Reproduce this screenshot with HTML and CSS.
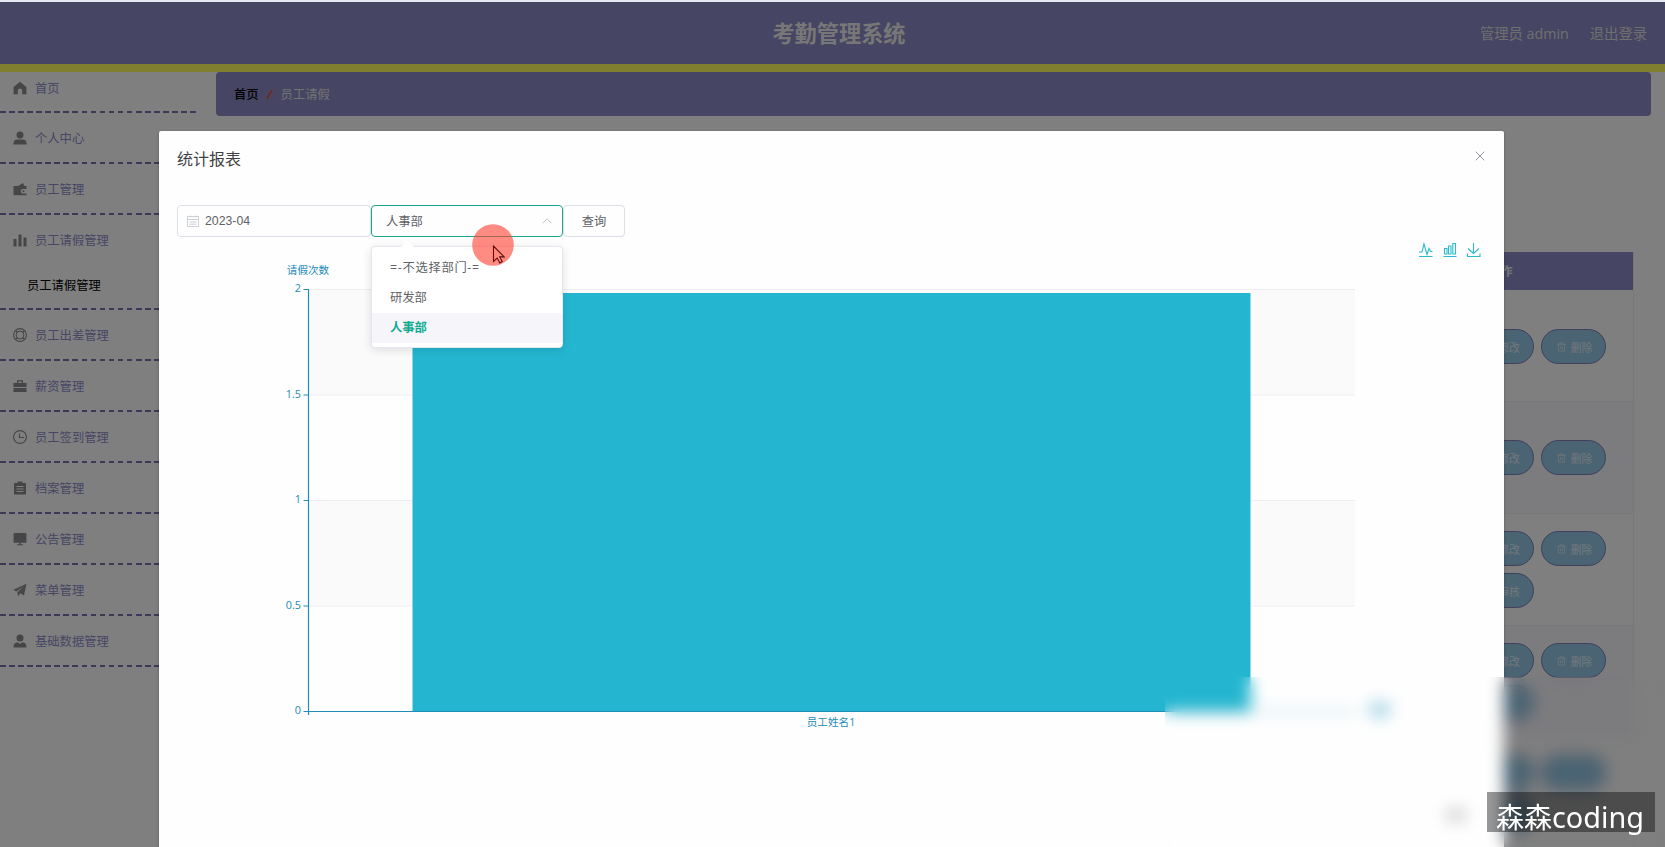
FILE: index.html
```html
<!DOCTYPE html>
<html lang="zh-CN">
<head>
<meta charset="utf-8">
<title>考勤管理系统</title>
<link rel="stylesheet" href="styles.css">
</head>
<body>
<div class="app">
  <header class="topbar">
    <span class="side"></span>
    <h1 class="brand">考勤管理系统</h1>
    <div class="side user"><span>管理员 admin</span><span>退出登录</span></div>
  </header>
  <div class="body">
    <nav class="menu">
      <div class="item first"><svg viewBox="0 0 14 14"><path d="M7 .8 13.400 6v7.200H9.200V9.600a2.200 2.200 0 0 0-4.400 0v3.600H.6V6z"/></svg><span>首页</span></div>
      <div class="item"><svg viewBox="0 0 14 14"><circle cx="7" cy="4" r="3.500"/><path d="M.5 13.500V12c0-2.500 2-3.500 4-3.500h5c2 0 4 1 4 3.500v1.500z"/></svg><span>个人中心</span></div>
      <div class="item"><svg viewBox="0 0 14 14"><path d="M.5 4H5l5-3 1.500 3h2v3H10a2 2 0 0 0 0 4.500h3.500v1.800H.5z"/><circle cx="10.500" cy="9.200" r="1"/></svg><span>员工管理</span></div>
      <div class="item open"><svg viewBox="0 0 14 14"><path d="M.5 6h3v7.500h-3zM5.500 1.500h3v12h-3zM10.500 4.500h3v9h-3z"/></svg><span>员工请假管理</span></div>
      <div class="sub">员工请假管理</div>
      <div class="item"><svg viewBox="0 0 14 14" class="line"><circle cx="7" cy="7" r="6.400"/><circle cx="7" cy="7" r="3.800"/><path d="m2.500 2.500 2 2m5 5 2 2m0-9-2 2m-5 5-2 2"/></svg><span>员工出差管理</span></div>
      <div class="item"><svg viewBox="0 0 14 14"><path d="M.5 4H4V1.200h6V4h3.500v4H.5zm4.800 0h3.400V2.400H5.300zM.5 9h13v4H.5z"/></svg><span>薪资管理</span></div>
      <div class="item"><svg viewBox="0 0 14 14" class="line"><circle cx="7" cy="7" r="6.400"/><path d="M6.500 3.500v4H11"/></svg><span>员工签到管理</span></div>
      <div class="item"><svg viewBox="0 0 14 14"><path d="M1 2h3.500V.5h5V2H13v11.500H1zm2.500 3v1h7V5zm0 2.500v1h7v-1zm0 2.500v1h7v-1z" fill-rule="evenodd"/></svg><span>档案管理</span></div>
      <div class="item"><svg viewBox="0 0 14 14"><path d="M.6 1h12.800v9.800H7.700v1.400H10v1H4v-1h2.300v-1.400H.6z"/></svg><span>公告管理</span></div>
      <div class="item"><svg viewBox="0 0 14 14"><path d="M13.500.8 11 12.500 7.200 10.300 5 13.500 4.400 9.200 10.800 3.500 3.400 8.500.4 6.800z"/></svg><span>菜单管理</span></div>
      <div class="item"><svg viewBox="0 0 14 14"><circle cx="7" cy="4" r="3.500"/><path d="M.5 13.500c0-4 2-4.800 4-5.200L7 10l2.500-1.700c2 .4 4 1.200 4 5.200z"/></svg><span>基础数据管理</span></div>
    </nav>
    <main class="main">
      <div class="crumbs"><b>首页</b><i>/</i><span>员工请假</span></div>
      <section class="table">
        <div class="thead">操作</div>
        <div class="row mid"><span class="btn edit">修改</span><span class="btn"><svg viewBox="0 0 10 10"><path d="M0 2h10M3 2V.5h4V2M1.500 2v7.500h7V2M4 4v3.500M6 4v3.500"/></svg>删除</span></div>
        <div class="row mid alt"><span class="btn edit">修改</span><span class="btn"><svg viewBox="0 0 10 10"><path d="M0 2h10M3 2V.5h4V2M1.500 2v7.500h7V2M4 4v3.500M6 4v3.500"/></svg>删除</span></div>
        <div class="row"><span class="btn edit">修改</span><span class="btn"><svg viewBox="0 0 10 10"><path d="M0 2h10M3 2V.5h4V2M1.500 2v7.500h7V2M4 4v3.500M6 4v3.500"/></svg>删除</span><span class="btn edit">审核</span></div>
        <div class="row alt"><span class="btn edit">修改</span><span class="btn"><svg viewBox="0 0 10 10"><path d="M0 2h10M3 2V.5h4V2M1.500 2v7.500h7V2M4 4v3.500M6 4v3.500"/></svg>删除</span><span class="btn"></span></div>
        <div class="row"><span class="btn"></span><span class="btn"></span><span class="btn"></span></div>
      </section>
    </main>
  </div>
</div>
<div class="overlay">
  <section class="dialog">
    <div class="dhead"><h2>统计报表</h2><svg class="close" viewBox="0 0 10 10"><path d="m.7.700 8.600 8.600M9.300.7.700 9.300"/></svg></div>
    <div class="form">
      <div class="field date"><svg viewBox="0 0 12 12"><path d="M.5 1.500h11v10H.5zM.5 4.500h11M3 .5v2M9 .5v2M2.500 7h7M2.500 9.200h7"/></svg>2023-04</div>
      <div class="field select">人事部<svg viewBox="0 0 10 6"><path d="m.7 5.200 4.300-4.400 4.300 4.400"/></svg>
        <ul class="drop"><li class="none">=-不选择部门-=</li><li>研发部</li><li class="on">人事部</li></ul>
      </div>
      <div class="field query">查询</div>
    </div>
    <svg class="chart" viewBox="160 237 1344 610" width="1344" height="610">
      <g class="bands"><path d="M309 289.500h1046v105H309zM309 500.500h1046v105H309z"/></g>
      <path class="grid" d="M309 289.500h1046M309 395h1046M309 500.500h1046M309 606h1046"/>
      <rect class="bar" x="412.500" y="293" width="838" height="418.500"/>
      <path class="axis" d="M308.500 289v426M303.500 289.500h5M303.500 395h5M303.500 500.500h5M303.500 606h5M303.500 711.500H1250"/>
      <path class="axis faint" d="M1250 711.500h105"/>
      <rect class="soft" x="1369" y="702" width="21" height="15" rx="4"/>
      <g class="labels" text-anchor="end">
        <text x="301" y="292">2</text><text x="301" y="397.500">1.5</text><text x="301" y="503">1</text><text x="301" y="608.500">0.5</text><text x="301" y="714">0</text>
      </g>
      <g class="labels cn" text-anchor="middle"><text x="308" y="274">请假次数</text><text x="831" y="725.500">员工姓名1</text></g>
      <g class="tools">
        <path d="M1419 252h3l2-8 3 10.500 2-6 1.500 3h2M1419 256.500h13.500"/>
        <path d="M1444.500 248.500h2.500v5.500h-2.500zM1448.500 246h2.500v8h-2.500zM1452.800 243.500h2.700V254h-2.700zM1443.500 256.500h13"/>
        <path d="M1473.500 243v10.500M1468 248.500l5.500 5 5.500-5M1467.500 253.500v3h12.500v-3"/>
      </g>
      <ellipse class="smudge" cx="1456" cy="815" rx="11" ry="7"/>
    </svg>
  </section>
</div>
<div class="blur"></div>
<svg class="pointer" viewBox="0 0 42 42"><circle cx="21" cy="21" r="20.800"/><path d="M21.500 22v15.500l3.700-3.400 2.600 4.800 2.400-1.300-2.500-4.700h4.500z"/></svg>
<div class="mark">森森<span>coding</span></div>
</body>
</html>
```
FILE: styles.css
```css
* { box-sizing: border-box; }
body {
  margin: 0;
  width: 1665px;
  height: 847px;
  overflow: hidden;
  position: relative;
  background: #e4e9f2;
  font: 12.3px "Open Sans", "Noto Sans CJK SC", sans-serif;
}
.app { height: 845px; margin-top: 2px; background: #fff; display: flex; flex-direction: column; overflow: hidden; position: absolute; top: 0; left: 0; right: 0; }
.topbar {
  flex: 0 0 70px;
  display: flex;
  align-items: center;
  justify-content: space-between;
  background: #8c8ac6;
  border-bottom: 8px solid #ffff5e;
  padding: 0 18px 2px 31px;
}
.side { width: 300px; }
.brand { margin: 0; font-size: 22.200px; font-weight: 700; color: #eee; }
.user { display: flex; justify-content: flex-end; gap: 21px; color: #dfdfdf; font-size: 14.300px; }
.body { display: flex; flex: 1; min-height: 0; }
.menu { width: 216px; flex: none; padding-right: 20px; }
.item {
  height: 51px;
  display: flex;
  align-items: center;
  gap: 8px;
  padding: 0 0 1px 13px;
  color: #8f8dc8;
  background: repeating-linear-gradient(90deg, #7472ac 0 5.600px, transparent 5.600px 9.060px) 0 100% / 100% 2px no-repeat;
}
.item svg { width: 14px; height: 14px; fill: #8c8c90; }
.item svg.line { fill: none; stroke: #8c8c90; stroke-width: 1.100; }
.item.first { height: 41px; padding-bottom: 9px; }
.item.open { background: none; }
.sub {
  height: 44px;
  padding: 11px 0 0 27px;
  line-height: 18px;
  color: #000;
  background: repeating-linear-gradient(90deg, #7472ac 0 5.600px, transparent 5.600px 9.060px) 0 100% / 100% 2px no-repeat;
}
.main { flex: 1; padding-right: 14px; }
.crumbs {
  height: 44px;
  border-radius: 4px;
  background: #8c8ac6;
  display: flex;
  align-items: center;
  padding: 0 18px;
  color: #e4e4e4;
}
.crumbs b { color: #000; font-weight: 500; }
.crumbs i { color: #f04a3a; font-weight: 700; width: 22px; text-align: center; }
.table { width: 200px; margin: 136px 17px 0 auto; border-right: 1px solid #f0f0f4; }
.thead { height: 38px; background: #8c8ac6; color: #eee; font-weight: 700; line-height: 40px; padding-left: 54px; }
.row {
  height: 112px;
  display: flex;
  flex-wrap: wrap;
  align-content: flex-start;
  gap: 7px;
  padding: 17px 20px 0 35px;
  border-bottom: 1px solid #f0f0f6;
}
.row.mid { padding-top: 39px; }
.row.alt { background: #f8f8fe; }
.row.mid.alt { padding-top: 38px; }
.btn {
  width: 65px;
  height: 35px;
  border-radius: 18px;
  border: 1px solid #8280b8;
  background: #94c9e6;
  color: #e6f0f6;
  font-size: 10.800px;
  display: flex;
  align-items: center;
  justify-content: center;
  gap: 5px;
  padding-left: 2px;
}
.btn.edit { padding-left: 15px; }
.btn svg { width: 9px; height: 10px; fill: none; stroke: #d6e6ee; }
.overlay { position: absolute; inset: 2px 0 0; background: rgba(0, 0, 0, .5); padding: 129px 0 0 159px; }
.dialog {
  width: 1345px;
  height: 730px;
  background: #fefefe;
  border-radius: 2px;
  box-shadow: 0 1px 3px rgba(0, 0, 0, .3);
}
.overlay { overflow: hidden; }
.dhead { height: 74px; padding: 16px 19px 0 18px; display: flex; justify-content: space-between; }
.dhead h2 { margin: 0; font-size: 16px; font-weight: 400; line-height: 24px; color: #414245; }
.close { width: 10px; height: 10px; margin-top: 4px; fill: none; stroke: #909399; }
.form { display: flex; height: 32px; padding-left: 18px; color: #606266; }
.field { height: 32px; border: 1px solid #dcdfe6; border-radius: 4px; display: flex; align-items: center; }
.date { width: 194px; padding-left: 9px; gap: 6px; font-family: "Liberation Sans", Arial, sans-serif; }
.date svg { width: 12px; height: 12px; fill: none; stroke: #c0c4cc; stroke-width: .8; }
.select { position: relative; width: 192px; border-color: #1aa78e; padding: 0 10px 0 14px; justify-content: space-between; }
.select > svg { width: 10px; height: 6px; fill: none; stroke: #c0c4cc; }
.query { width: 62px; justify-content: center; }
.drop {
  position: absolute;
  top: 40px;
  left: -1px;
  width: 192px;
  height: 102px;
  margin: 0;
  padding: 6px 0;
  list-style: none;
  background: #fff;
  border: 1px solid #e4e7ed;
  border-radius: 4px;
  box-shadow: 0 2px 10px rgba(0, 0, 0, .12);
  z-index: 2;
}
.drop::before {
  content: "";
  position: absolute;
  top: -5px;
  left: 31px;
  width: 9px;
  height: 9px;
  background: #fff;
  transform: rotate(45deg);
}
.drop li { height: 30px; line-height: 30px; padding-left: 18px; }
.drop .none { letter-spacing: .7px; }
.drop .on { background: #f5f5fa; color: #10ab90; font-weight: 700; }
.chart { display: block; margin-left: 1px; }
.bands { fill: #fafafb; }
.grid { stroke: #eeeef0; fill: none; }
.bar { fill: #24b6d0; }
.axis { stroke: #238bb8; fill: none; stroke-width: 1.200; }
.axis.faint { stroke: #9ccbdc; stroke-width: 2; }
.soft { fill: #a9d6e8; }
.labels { fill: #238bb8; font: 10.800px "Open Sans", "Noto Sans CJK SC", sans-serif; }
.labels.cn { font-size: 10.600px; }
.tools { fill: none; stroke: #2bbad0; stroke-width: 1.100; }
.smudge { fill: #d0d0d0; }
.blur { position: absolute; left: 1165px; top: 677px; width: 500px; height: 170px; backdrop-filter: blur(8px); z-index: 3; }
.pointer { position: absolute; left: 472px; top: 224px; width: 42px; height: 42px; z-index: 3; }
.pointer circle { fill: rgba(255, 61, 46, .6); }
.pointer path { fill: #ff8a7d; stroke: #650a0a; stroke-width: 1.100; }
.mark {
  position: absolute;
  z-index: 4;
  left: 1487px;
  top: 792px;
  width: 168px;
  height: 40px;
  padding-left: 9px;
  background: rgba(0, 0, 0, .4);
  color: #fff;
  font: 28px/48px "Noto Sans CJK SC", sans-serif;
  white-space: nowrap;
}
.mark span { font-family: "Noto Sans", sans-serif; font-size: 28.800px; }
```
